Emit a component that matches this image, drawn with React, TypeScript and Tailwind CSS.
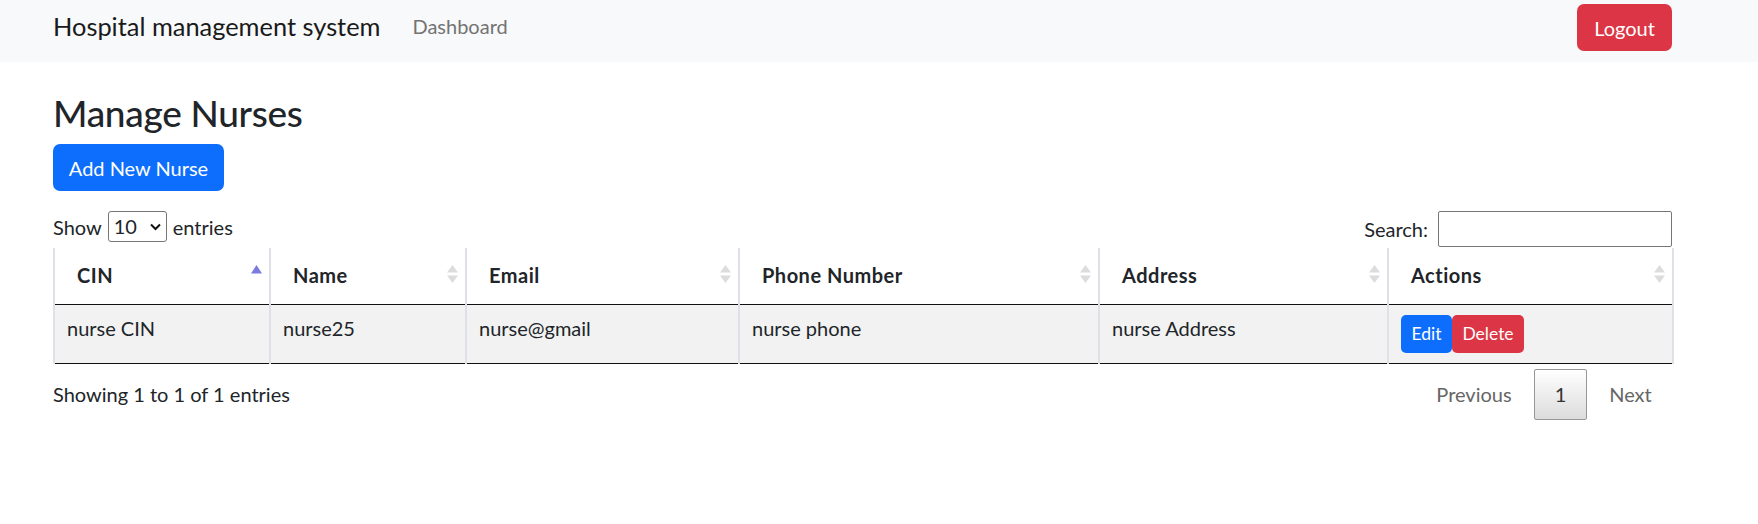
import React from "react";

type Col = { label: string; width: number; sort: "asc" | "both" };

const cols: Col[] = [
  { label: "CIN", width: 216, sort: "asc" },
  { label: "Name", width: 196, sort: "both" },
  { label: "Email", width: 273, sort: "both" },
  { label: "Phone Number", width: 360, sort: "both" },
  { label: "Address", width: 289, sort: "both" },
  { label: "Actions", width: 285, sort: "both" },
];

function SortIcon({ kind }: { kind: "asc" | "both" }) {
  if (kind === "asc") {
    return (
      <svg width="11" height="18" viewBox="0 0 11 18" className="absolute right-[7px] top-[17px]">
        <polygon points="0,8.5 5.5,0 11,8.5" fill="#7b7bdf" />
      </svg>
    );
  }
  return (
    <svg width="11" height="18" viewBox="0 0 11 18" className="absolute right-[7px] top-[17px]">
      <polygon points="0,7.5 5.5,0 11,7.5" fill="#dcdcdc" />
      <polygon points="0,10.5 11,10.5 5.5,18" fill="#dcdcdc" />
    </svg>
  );
}

export default function App() {
  const cells = ["nurse CIN", "nurse25", "nurse@gmail", "nurse phone", "nurse Address"];
  return (
    <div className="min-h-[524px] bg-white font-['Lato',sans-serif] text-[20px] text-[#212529]">
      <nav className="flex h-[62px] items-start bg-[#f8f9fa] pl-[53px] pr-[86px]">
        <a className="mt-[8px] text-[25.4px] leading-[37.5px] text-[#1a1a1a]">Hospital management system</a>
        <a className="ml-[32px] mt-[11px] text-[20px] leading-[30px] text-[#737373]">Dashboard</a>
        <div className="flex-1" />
        <button className="mt-[4px] flex h-[47px] w-[95px] items-center justify-center rounded-[7px] bg-[#dc3545] text-[20px] leading-[30px] text-white">
          Logout
        </button>
      </nav>

      <main className="pl-[53px] pr-[86px]">
        <h2 className="mt-[27px] text-[37px] font-medium leading-[48px] tracking-[-0.3px]">Manage Nurses</h2>
        <button className="mt-[7px] flex h-[47px] w-[171px] items-center justify-center rounded-[7px] bg-[#0d6efd] text-[20px] leading-[30px] text-white">
          Add New Nurse
        </button>

        <div className="mt-[20px] flex h-[37px] items-start justify-between">
          <div className="flex h-[31px] items-center">
            <span>Show</span>
            <div className="relative ml-[6px] mr-[6px] h-[31px] w-[59px] rounded-[3px] border border-[#767676] bg-white">
              <span className="absolute left-[5px] top-[-1px] text-[20px] leading-[30px]">10</span>
              <svg width="11" height="8" viewBox="0 0 11 8" className="absolute right-[5px] top-[11px]">
                <polyline points="1,1.5 5.5,6 10,1.5" fill="none" stroke="#111" strokeWidth="2" />
              </svg>
            </div>
            <span>entries</span>
          </div>
          <div className="flex h-[36px] items-center">
            <span>Search:</span>
            <div className="ml-[10px] h-[36px] w-[234px] rounded-[2px] border border-[#767676] bg-white" />
          </div>
        </div>

        <table className="w-[1619px] table-fixed border-collapse">
          <colgroup>
            {cols.map((c) => (
              <col key={c.label} style={{ width: c.width }} />
            ))}
          </colgroup>
          <thead>
            <tr>
              {cols.map((c, i) => (
                <th
                  key={c.label}
                  className={
                    "relative h-[56px] border-b border-l-2 border-b-[#111] border-l-[#dee2e6] pb-[2px] pl-[22px] pr-[22px] text-left align-middle text-[20px] font-bold leading-[30px] tracking-[0.5px]" +
                    (i === cols.length - 1 ? " border-r-2 border-r-[#dee2e6]" : "")
                  }
                >
                  {c.label}
                  <SortIcon kind={c.sort} />
                </th>
              ))}
            </tr>
          </thead>
          <tbody>
            <tr className="bg-[#f2f2f2]">
              {cells.map((t) => (
                <td key={t} className="h-[59px] border-b border-l-2 border-b-[#111] border-l-[#dee2e6] px-[12px] pt-[8px] align-top leading-[30px]">
                  {t}
                </td>
              ))}
              <td className="h-[59px] border-b border-l-2 border-r-2 border-b-[#111] border-l-[#dee2e6] border-r-[#dee2e6] px-[12px] pt-[10px] align-top">
                <div className="flex">
                  <button className="flex h-[38px] w-[51px] items-center justify-center rounded-[5px] bg-[#0d6efd] text-[17.5px] leading-[26px] text-white">
                    Edit
                  </button>
                  <button className="flex h-[38px] w-[72px] items-center justify-center rounded-[5px] bg-[#dc3545] text-[17.5px] leading-[26px] text-white">
                    Delete
                  </button>
                </div>
              </td>
            </tr>
          </tbody>
        </table>

        <div className="flex items-start justify-between">
          <div className="pt-[15px] leading-[30px]">Showing 1 to 1 of 1 entries</div>
          <div className="flex pt-[5px] leading-[30px]">
            <span className="flex h-[51px] w-[116px] items-center justify-center text-[#666]">Previous</span>
            <span className="ml-[2px] flex h-[51px] w-[53px] items-center justify-center rounded-[2px] border border-[#979797] bg-gradient-to-b from-white to-[#dcdcdc] text-[#333]">
              1
            </span>
            <span className="ml-[2px] flex h-[51px] w-[83px] items-center justify-center text-[#666]">Next</span>
          </div>
        </div>
      </main>
    </div>
  );
}
